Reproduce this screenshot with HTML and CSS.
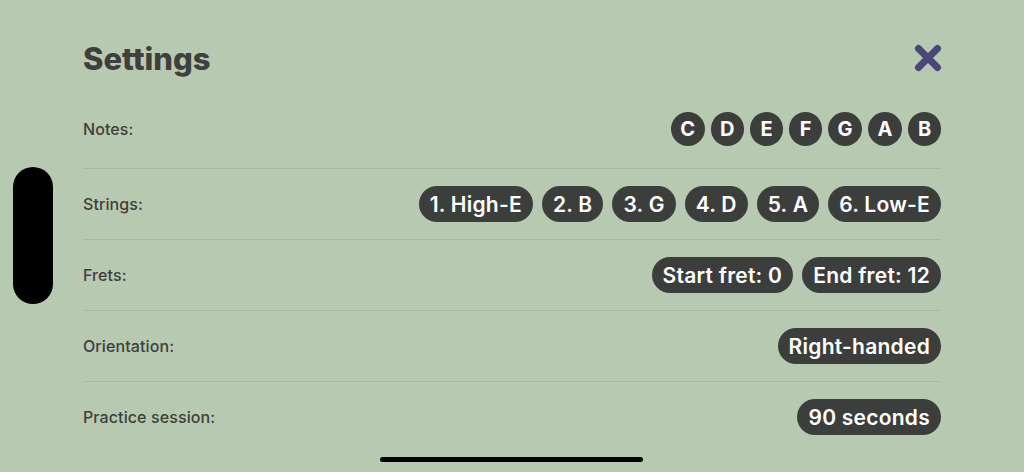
FILE: index.html
```html
<!DOCTYPE html>
<html>
<head>
    <meta charset="utf-8">
    <meta name="viewport" content="width=device-width, initial-scale=1.0">
    <title>Settings</title>
    <link rel="stylesheet" href="styles.css">
</head>
<body>
    <div class="side-pill"></div>

    <div class="settings">
        <div class="header">
            <h1 class="title">Settings</h1>
            <button class="close-btn" aria-label="Close">
                <svg width="28" height="28" viewBox="0 0 28 28">
                    <line x1="4.5" y1="4.5" x2="23.5" y2="23.5" />
                    <line x1="23.5" y1="4.5" x2="4.5" y2="23.5" />
                </svg>
            </button>
        </div>

        <div class="row row-notes">
            <div class="label">Notes:</div>
            <div class="chips chips-notes">
                <span class="note">C</span>
                <span class="note">D</span>
                <span class="note">E</span>
                <span class="note">F</span>
                <span class="note">G</span>
                <span class="note">A</span>
                <span class="note">B</span>
            </div>
        </div>

        <div class="row">
            <div class="label">Strings:</div>
            <div class="chips">
                <span class="chip">1. High-E</span>
                <span class="chip">2. B</span>
                <span class="chip">3. G</span>
                <span class="chip">4. D</span>
                <span class="chip">5. A</span>
                <span class="chip">6. Low-E</span>
            </div>
        </div>

        <div class="row">
            <div class="label">Frets:</div>
            <div class="chips">
                <span class="chip">Start fret: 0</span>
                <span class="chip">End fret: 12</span>
            </div>
        </div>

        <div class="row">
            <div class="label">Orientation:</div>
            <div class="chips">
                <span class="chip">Right-handed</span>
            </div>
        </div>

        <div class="row">
            <div class="label">Practice session:</div>
            <div class="chips">
                <span class="chip">90 seconds</span>
            </div>
        </div>
    </div>

    <div class="home-indicator"></div>
</body>
</html>
```

FILE: styles.css
```css
body, html {
    height: 100%;
    margin: 0;
    font-family: Inter, "Noto Sans", sans-serif;
    background-color: #b8c9b1;
    color: #3d403b;
    overflow: hidden;
}

.settings {
    padding: 0 83px;
}

.header {
    height: 72px;
    padding-top: 22px;
    display: flex;
    justify-content: space-between;
    align-items: center;
}

.title {
    margin: 0;
    font-size: 31px;
    font-weight: 800;
}

.close-btn {
    border: none;
    background: none;
    padding: 0;
    margin-right: -1px;
    width: 28px;
    height: 28px;
    cursor: pointer;
}

.close-btn svg {
    display: block;
    stroke: #4a4779;
    stroke-width: 7;
    stroke-linecap: round;
}

.row {
    height: 70px;
    border-top: 1px solid #a8baa1;
    display: flex;
    justify-content: space-between;
    align-items: center;
}

.row-notes {
    border-top: none;
    height: 69px;
    padding-bottom: 5px;
}

.label {
    font-size: 16px;
    font-weight: 500;
    letter-spacing: 0.1px;
}

.chips {
    display: flex;
    gap: 9px;
}

.chips-notes {
    gap: 6px;
}

.chip, .note {
    background-color: #3c3e3b;
    color: #fff;
    font-size: 21px;
    font-weight: 600;
    letter-spacing: 0.25px;
    display: flex;
    align-items: center;
    justify-content: center;
}

.chip {
    height: 36px;
    padding: 0 11px;
    border-radius: 18px;
}

.note {
    height: 34px;
    min-width: 14px;
    padding: 0 9.5px;
    border-radius: 17px;
    font-size: 20px;
    font-weight: 700;
    letter-spacing: 0;
}

/* device chrome overlays */
.side-pill {
    position: absolute;
    left: 13px;
    top: 167px;
    width: 40px;
    height: 137px;
    border-radius: 20px;
    background-color: #000;
}

.home-indicator {
    position: absolute;
    left: 380px;
    top: 457px;
    width: 263px;
    height: 5px;
    border-radius: 3px;
    background-color: #000;
}
```
